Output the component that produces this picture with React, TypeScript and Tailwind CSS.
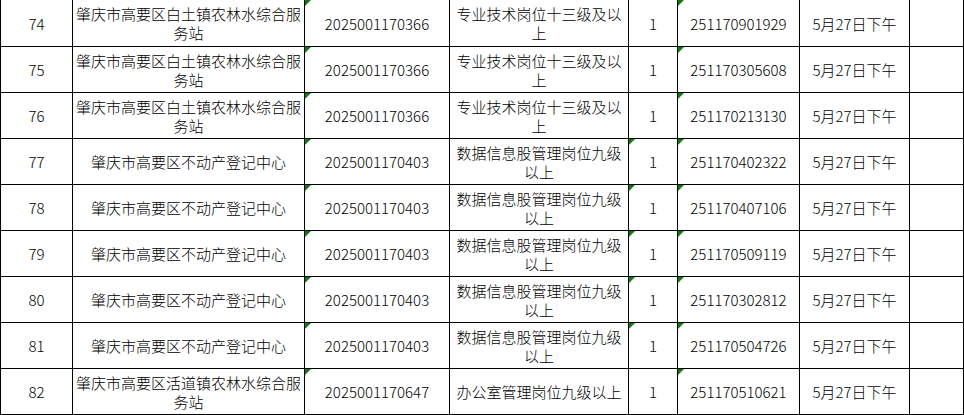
import React from "react";

type Row = {
  no: string;
  unit: string;
  code: string;
  post: string;
  count: string;
  ticket: string;
  time: string;
  mark5: boolean;
};

const rows: Row[] = [
  { no: "74", unit: "肇庆市高要区白土镇农林水综合服务站", code: "2025001170366", post: "专业技术岗位十三级及以上", count: "1", ticket: "251170901929", time: "5月27日下午", mark5: false },
  { no: "75", unit: "肇庆市高要区白土镇农林水综合服务站", code: "2025001170366", post: "专业技术岗位十三级及以上", count: "1", ticket: "251170305608", time: "5月27日下午", mark5: false },
  { no: "76", unit: "肇庆市高要区白土镇农林水综合服务站", code: "2025001170366", post: "专业技术岗位十三级及以上", count: "1", ticket: "251170213130", time: "5月27日下午", mark5: false },
  { no: "77", unit: "肇庆市高要区不动产登记中心", code: "2025001170403", post: "数据信息股管理岗位九级以上", count: "1", ticket: "251170402322", time: "5月27日下午", mark5: true },
  { no: "78", unit: "肇庆市高要区不动产登记中心", code: "2025001170403", post: "数据信息股管理岗位九级以上", count: "1", ticket: "251170407106", time: "5月27日下午", mark5: true },
  { no: "79", unit: "肇庆市高要区不动产登记中心", code: "2025001170403", post: "数据信息股管理岗位九级以上", count: "1", ticket: "251170509119", time: "5月27日下午", mark5: true },
  { no: "80", unit: "肇庆市高要区不动产登记中心", code: "2025001170403", post: "数据信息股管理岗位九级以上", count: "1", ticket: "251170302812", time: "5月27日下午", mark5: true },
  { no: "81", unit: "肇庆市高要区不动产登记中心", code: "2025001170403", post: "数据信息股管理岗位九级以上", count: "1", ticket: "251170504726", time: "5月27日下午", mark5: true },
  { no: "82", unit: "肇庆市高要区活道镇农林水综合服务站", code: "2025001170647", post: "办公室管理岗位九级以上", count: "1", ticket: "251170510621", time: "5月27日下午", mark5: false },
];

function Mark() {
  return (
    <span className="absolute left-0 top-0 w-[6px] h-[6px] bg-[#117a11] [clip-path:polygon(0_0,100%_0,0_100%)]" />
  );
}

function Cell({ children, mark }: { children?: React.ReactNode; mark?: boolean }) {
  return (
    <div className="relative bg-white flex items-center justify-center text-center px-[2px] leading-[19px] break-all">
      {mark ? <Mark /> : null}
      <span>{children}</span>
    </div>
  );
}

export default function App() {
  return (
    <div
      className="w-[964px] h-[415px] bg-white overflow-hidden text-[15px] font-light text-black"
      style={{ fontFamily: '"Noto Sans CJK SC", "Noto Sans", sans-serif' }}
    >
      <div className="grid grid-cols-[71px_231px_144px_178px_48px_121px_109px_53px] grid-rows-[46px_repeat(8,45px)] gap-px bg-black px-px pb-px w-[964px]">
        {rows.map((r) => (
          <React.Fragment key={r.no}>
            <Cell>{r.no}</Cell>
            <Cell>{r.unit}</Cell>
            <Cell mark>{r.code}</Cell>
            <Cell>{r.post}</Cell>
            <Cell mark={r.mark5}>{r.count}</Cell>
            <Cell mark>{r.ticket}</Cell>
            <Cell>{r.time}</Cell>
            <Cell />
          </React.Fragment>
        ))}
      </div>
    </div>
  );
}
